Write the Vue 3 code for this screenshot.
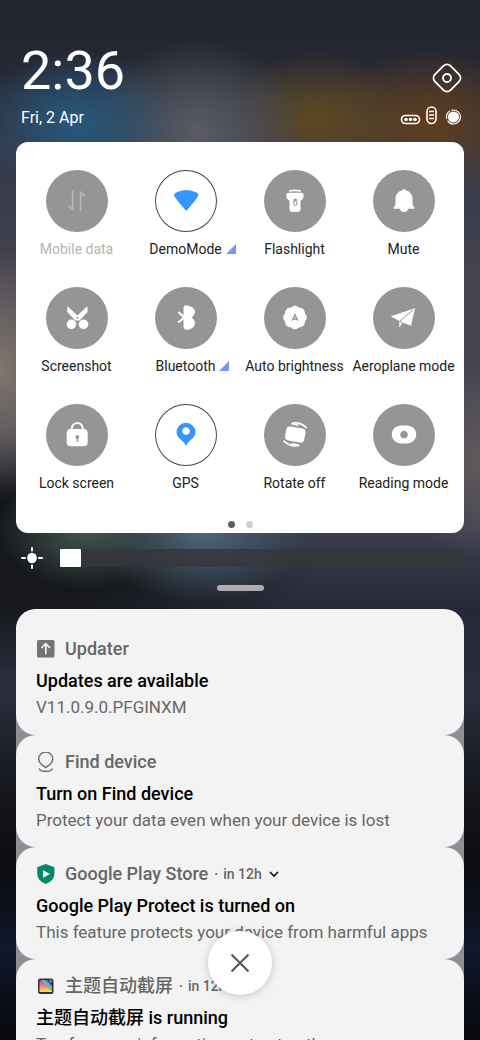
<script setup>
import { ref } from 'vue'

const brightness = ref(0)

const tiles = [
  { id: 'data', label: 'Mobile data', state: 'disabled' },
  { id: 'wifi', label: 'DemoMode', state: 'on', more: true },
  { id: 'torch', label: 'Flashlight' },
  { id: 'mute', label: 'Mute' },
  { id: 'shot', label: 'Screenshot' },
  { id: 'bt', label: 'Bluetooth', more: true },
  { id: 'auto', label: 'Auto brightness' },
  { id: 'plane', label: 'Aeroplane mode' },
  { id: 'lock', label: 'Lock screen' },
  { id: 'gps', label: 'GPS', state: 'on' },
  { id: 'rotate', label: 'Rotate off' },
  { id: 'read', label: 'Reading mode' },
]

const notices = [
  { icon: 'updater', app: 'Updater', title: 'Updates are available', text: 'V11.0.9.0.PFGINXM' },
  { icon: 'find', app: 'Find device', title: 'Turn on Find device', text: 'Protect your data even when your device is lost' },
  { icon: 'play', app: 'Google Play Store', time: 'in 12h', expand: true, title: 'Google Play Protect is turned on', text: 'This feature protects your device from harmful apps' },
  { icon: 'theme', app: '主题自动截屏', time: 'in 12h', expand: true, title: '主题自动截屏 is running', text: 'Tap for more information or to stop the app.' },
]
</script>

<template>
  <main class="shade">
    <header class="top">
      <div>
        <div class="clock">2:36</div>
        <div class="date">Fri, 2 Apr</div>
      </div>
      <div class="top-right">
        <button class="bare" aria-label="Settings">
          <svg class="gear" viewBox="0 0 34 34">
            <rect x="6" y="6" width="22" height="22" rx="5" transform="rotate(45 17 17)" />
            <circle cx="17" cy="17" r="4" />
          </svg>
        </button>
        <svg class="status" viewBox="0 0 64 20">
          <rect x="1.500" y="9.500" width="18" height="8" rx="4" />
          <g class="solid"><circle cx="6" cy="13.500" r="1.800" /><circle cx="10.500" cy="13.500" r="1.800" /><circle cx="15" cy="13.500" r="1.800" /></g>
          <rect x="27" y="1" width="9" height="16.500" rx="4.500" />
          <path d="M29 5.500h5M29 9h5M29 12.500h5" />
          <circle cx="53.500" cy="11" r="7" stroke-dasharray="18 2 9 1.500" stroke-width="1.200" />
          <circle class="solid" cx="53.500" cy="11" r="5.600" />
        </svg>
      </div>
    </header>

    <section class="panel">
      <div class="tiles">
        <button v-for="t in tiles" :key="t.id" class="tile" :class="t.state">
          <span class="disc">
            <svg viewBox="0 0 62 62">
              <g v-if="t.id === 'data'">
                <path d="M25.800 20.500h1.600V41L22 36.500v-1.700l3.800 2.800zM33.800 41h1.600V24l3.800 3v-1.800L33.800 20.500z" />
              </g>
              <path v-else-if="t.id === 'wifi'" d="M19 25.500Q19 23.500 21 22.500Q31.200 17.500 41.500 22.500Q43.500 23.500 43.400 25.500Q43 27.500 31.200 41Q19.500 27.500 19 25.500z" />
              <g v-else-if="t.id === 'torch'">
                <path d="M25 20.500q6-1.800 12 0v1.300q-6-1-12 0z" />
                <path d="M22.300 25q0-2.200 2.700-2.200h12q2.700 0 2.700 2.200 0 4-3.200 5.800V39q0 3-3 3h-5q-3 0-3-3v-8.200Q22.300 29 22.300 25z" />
                <rect class="cut-line" x="29.800" y="29" width="3" height="6.500" rx="1.500" />
                <path class="cut" d="M30.300 29h2v2.500h-2z" />
              </g>
              <path v-else-if="t.id === 'mute'" d="M31 19q1.500 0 2 1.500c4 1 6.500 4 6.500 8v6c0 1.500 2 2 2 4.300h-6.500Q34.500 42 31 42t-4-3.200h-6.500c0-2.300 2-2.800 2-4.300v-6c0-4 2.500-7 6.500-8q.5-1.500 2-1.500z" />
              <g v-else-if="t.id === 'shot'">
                <path d="M21.300 19L31.400 28.500 41.500 19v6L33.500 33.500h-4.200L21.300 25z" />
                <circle cx="25.400" cy="37.300" r="4.800" /><circle cx="37.500" cy="37.300" r="4.800" />
                <circle class="cut" cx="31.400" cy="30.800" r="1" />
              </g>
              <g v-else-if="t.id === 'bt'">
                <path d="M28.500 30V20.500q0-2.500 3-2.300 8 1.500 8.500 6.300 0 3.500-3.500 6 3.500 2.300 3.500 6-.5 4.500-7 6.500-4.500 0-4.500-3.500z" />
                <path class="line" d="M23.300 25l6 5.400-6 5.200" />
              </g>
              <g v-else-if="t.id === 'auto'">
                <circle cx="31" cy="30.500" r="10.800" />
                <circle v-for="n in 8" :key="n" cx="31" cy="22.500" r="3.800" :transform="`rotate(${n * 45} 31 30.500)`" />
                <path class="cut-line wide" d="M28.300 33.500L31 27.800 33.700 33.500M29.300 32h3.500" />
              </g>
              <g v-else-if="t.id === 'plane'">
                <path d="M17.700 29.300L42 21.300 38 38.700 29.500 35.500 26.300 40.700V34z" />
                <path class="cut-line" d="M40 23L26.500 34.300l3 1.500" />
              </g>
              <g v-else-if="t.id === 'lock'">
                <rect x="20.700" y="25" width="21" height="17.300" rx="4" />
                <path class="line" d="M25.800 26v-1.500a5.500 5.500 0 0 1 11 0V26" />
                <circle class="cut" cx="31.300" cy="32.800" r="1.900" /><path class="cut" d="M30.600 33h1.500v5h-1.500z" />
              </g>
              <path v-else-if="t.id === 'gps'" fill-rule="evenodd" d="M31 18.700a9.300 9.300 0 0 1 9.400 9.300c0 4.500-3 6.500-5.600 8.700Q32 39.200 31 42q-1-2.800-3.800-5.300C24.600 34.500 21.600 32.500 21.600 28A9.300 9.300 0 0 1 31 18.700zM31 23.200a3.800 3.800 0 1 0 .1 0z" />
              <g v-else-if="t.id === 'rotate'">
                <rect x="21.500" y="23.500" width="19.500" height="14" rx="4" transform="rotate(10 31.300 30.500)" />
                <path class="line thin" d="M34.500 21.200L27.300 19.500q9-2.300 15.200 4.500M27.600 39.800l7.600 1.600q-9 2-15.700-4.800" />
              </g>
              <path v-else fill-rule="evenodd" d="M27.700 21.400h6.600a9 9 0 0 1 0 18h-6.600a9 9 0 0 1 0-18zM31 26.700a3.800 3.800 0 1 0 .1 0z" />
            </svg>
          </span>
          <span class="label">{{ t.label }}<svg v-if="t.more" class="more" viewBox="0 0 10 10"><path d="M0 10L10 0V10z" /></svg></span>
        </button>
      </div>
      <div class="pages"><i class="current"></i><i></i></div>
    </section>

    <div class="brightness">
      <svg class="sun" viewBox="0 0 22 22">
        <ellipse cx="11" cy="11" rx="4.800" ry="5.300" />
        <path d="M11 1v2.500M11 18.500V21M1 11h3M18 11h3" />
      </svg>
      <input v-model="brightness" type="range" min="0" max="100" aria-label="Brightness" />
    </div>
    <div class="handle"></div>

    <section class="stack">
      <article v-for="n in notices" :key="n.app" class="notice">
        <div class="source">
          <svg v-if="n.icon === 'updater'" class="app-icon" viewBox="0 0 20 20">
            <rect x="1" y="1" width="17.500" height="17.500" rx="1.500" fill="#747474" />
            <path d="M9.800 15.200V5.500M5.500 9l4.300-4.300L14 9" fill="none" stroke="#fff" stroke-width="1.600" />
          </svg>
          <svg v-else-if="n.icon === 'find'" class="app-icon" viewBox="0 0 20 20" fill="none" stroke="#747474" stroke-width="1.500">
            <path d="M9.700 15.500Q2.700 11.500 2.700 7a7 7 0 0 1 14 0q0 4.500-7 8.500zM3 16.500Q4.500 19.200 7.500 19.200h4.500q3 0 4.500-2.700" />
          </svg>
          <svg v-else-if="n.icon === 'play'" class="app-icon" viewBox="0 0 20 20">
            <path d="M9.800 0L18.400 3.200V9.500Q18.400 16.500 9.800 20 1.200 16.500 1.200 9.500V3.200z" fill="#078765" />
            <path d="M7 6.200v7.600l7-3.800z" fill="#fff" />
          </svg>
          <svg v-else class="app-icon" viewBox="0 0 20 20">
            <defs>
              <linearGradient id="art" x1="0" y1="0" x2="0" y2="1">
                <stop offset="0" stop-color="#c93fd8" /><stop offset=".5" stop-color="#f08a8a" /><stop offset="1" stop-color="#f4ec45" />
              </linearGradient>
            </defs>
            <rect x="2" y="2.500" width="15.500" height="15.500" rx="2" fill="#343438" />
            <path d="M3.500 4.500h2L16 15v1H3.500z" fill="url(#art)" />
            <path d="M5 4h5.500L16 9.500V15z" fill="#62cf9a" /><path d="M10.500 4L16 9.500V11.500L7.500 4z" fill="#5a86dc" />
            <circle cx="14.800" cy="5" r="1.600" fill="#777e8c" />
          </svg>
          <span class="app">{{ n.app }}</span>
          <span v-if="n.time" class="time"><span>·</span><span>{{ n.time }}</span></span>
          <svg v-if="n.expand" class="chevron" viewBox="0 0 10 10"><path d="M1 3l4 4 4-4" /></svg>
        </div>
        <h2>{{ n.title }}</h2>
        <p>{{ n.text }}</p>
      </article>
    </section>

    <button class="clear" aria-label="Clear all">
      <svg viewBox="0 0 20 20"><path d="M1.500 1.500l17 17M18.500 1.500l-17 17" /></svg>
    </button>
  </main>
</template>

<style>
body { margin: 0; }
</style>

<style scoped>
.shade {
  position: relative;
  box-sizing: border-box;
  height: 100vh;
  overflow: hidden;
  padding: 42px 16px 0;
  color: #fff;
  font-family: Roboto, "Noto Sans CJK SC", sans-serif;
  background:
    radial-gradient(100px 72px at 16% 122px, #27597f, #27597f88 50%, #27597f00),
    radial-gradient(110px 90px at 41% 130px, #5a5b64, #5a5b6488 50%, #5a5b6400),
    radial-gradient(90px 70px at 66% 120px, #61491f, #61491f88 50%, #61491f00),
    radial-gradient(110px 74px at 89% 122px, #613e1d, #613e1d88 50%, #613e1d00),
    radial-gradient(90px 60px at 18% 530px, #435651, #43565188 50%, #43565100),
    radial-gradient(110px 72px at 42% 530px, #50687b, #50687b88 50%, #50687b00),
    radial-gradient(90px 120px at 0 370px, #81766f, #81766f88 50%, #81766f00),
    radial-gradient(80px 100px at 100% 460px, #625a5c, #625a5c88 50%, #625a5c00),
    radial-gradient(320px 120px at 0 550px, #15171b 40%, #15171b00),
    linear-gradient(#22242e 0, #252732 60px, #343948 150px, #45434f 280px, #41434f 400px, #3c3e50 530px, #252835 610px, #292c39 700px, #14151b 800px, #0c0d12 870px, #10172a 950px, #07080c 1040px);
}
button {
  border: 0;
  padding: 0;
  background: none;
  font: inherit;
  color: inherit;
}
svg { display: block; }
.top {
  display: flex;
  justify-content: space-between;
  align-items: flex-end;
  padding: 0 0 14px 5px;
}
.clock { font-size: 54px; line-height: 58px; }
.date { margin-top: 8px; font-size: 16px; line-height: 20px; }
.top-right {
  display: flex;
  flex-direction: column;
  align-items: flex-end;
  gap: 11px;
  padding-bottom: 2px;
}
.gear, .status { fill: none; stroke: #fff; stroke-width: 1.8; }
.gear { width: 34px; height: 34px; }
.status { width: 64px; height: 20px; stroke-width: 1.6; }
.status .solid { fill: #fff; stroke: none; }
.panel {
  padding: 28px 6px 5px;
  border-radius: 12px;
  background: #fff;
  color: #222;
}
.tiles {
  display: grid;
  grid-template-columns: repeat(4, minmax(0, 1fr));
  row-gap: 28px;
}
.tile {
  display: flex;
  flex-direction: column;
  align-items: center;
  gap: 7px;
}
.disc {
  width: 62px;
  height: 62px;
  border-radius: 50%;
  background: #959595;
  fill: #fff;
}
.on .disc { background: #fff; box-shadow: inset 0 0 0 1px #444; fill: #3396ff; }
.disabled .disc { fill: #b8b8b8; }
.disabled { color: #b4b4b4; }
.cut { fill: #959595; }
.cut-line { fill: none; stroke: #959595; stroke-width: 1; }
.wide { stroke-width: 1.5; }
.line { fill: none; stroke: #fff; stroke-width: 2; }
.thin { stroke-width: 1.6; }
.label {
  position: relative;
  font-size: 14px;
  line-height: 20px;
  white-space: nowrap;
}
.more {
  position: absolute;
  left: 100%;
  bottom: 5px;
  width: 10px;
  height: 10px;
  margin-left: 4px;
  fill: #6b9bff;
}
.pages {
  display: flex;
  justify-content: center;
  gap: 11px;
  margin-top: 28px;
}
.pages i { width: 7px; height: 7px; border-radius: 50%; background: #d0d0d0; }
.pages .current { background: #606060; }
.brightness {
  display: flex;
  align-items: center;
  gap: 17px;
  padding: 14px 1px 0 5px;
}
.sun { width: 22px; height: 22px; fill: #fff; stroke: #fff; stroke-width: 2; stroke-linecap: round; }
.sun ellipse { stroke: none; }
input {
  appearance: none;
  flex: 1;
  min-width: 0;
  height: 18px;
  margin: 0;
  background: #34363ccc;
}
input::-webkit-slider-thumb {
  appearance: none;
  width: 21px;
  height: 18px;
  border-radius: 1px;
  background: #fff;
}
.handle {
  width: 47px;
  height: 6px;
  margin: 16px auto 18px;
  border-radius: 3px;
  background: #acacb1;
}
.stack {
  border-radius: 20px 20px 0 0;
  background: #8e8f96;
  color: #666;
}
.notice {
  padding: 15px 20px;
  border-radius: 20px;
  background: #f3f3f3;
}
.notice:first-child { padding: 28px 20px 16px; }
.source { display: flex; align-items: center; height: 24px; }
.app-icon { width: 20px; height: 20px; margin-right: 9px; }
.app { font-size: 18px; line-height: 24px; font-weight: 500; }
.time { display: flex; gap: 5px; margin-left: 6px; font-size: 14px; font-weight: 500; }
.chevron { width: 10px; height: 10px; margin-left: 7px; fill: none; stroke: #111; stroke-width: 1.6; }
h2 {
  margin: 8px 0 2px;
  color: #000;
  font-size: 18px;
  line-height: 24px;
  font-weight: 500;
}
p { margin: 0; font-size: 17px; line-height: 24px; }
.clear {
  position: absolute;
  left: 50%;
  bottom: 45px;
  display: grid;
  place-items: center;
  width: 64px;
  height: 64px;
  margin-left: -32px;
  border-radius: 50%;
  background: #fff;
  box-shadow: 0 1px 8px #0003;
}
.clear svg { width: 20px; height: 20px; fill: none; stroke: #555; stroke-width: 2; }
</style>
